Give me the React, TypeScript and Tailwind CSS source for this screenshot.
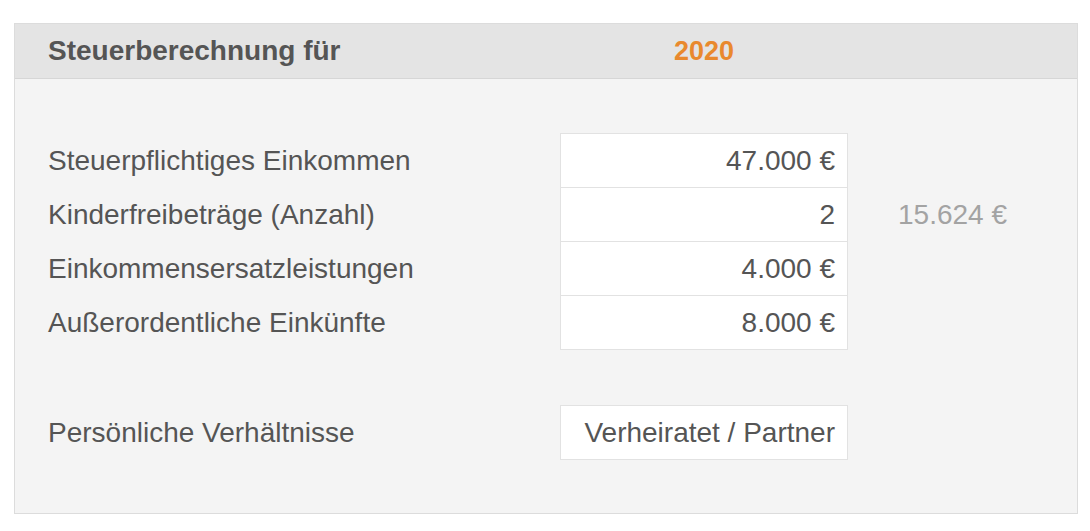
import React from 'react';

const rows = [
  { label: 'Steuerpflichtiges Einkommen', value: '47.000 €' },
  { label: 'Kinderfreibeträge (Anzahl)', value: '2', extra: '15.624 €' },
  { label: 'Einkommensersatzleistungen', value: '4.000 €' },
  { label: 'Außerordentliche Einkünfte', value: '8.000 €' },
];

export default function App() {
  return (
    <div className="min-h-[531px] bg-white pl-[14px] pt-[23px] font-['Liberation_Sans',Arial,sans-serif] text-[28px] text-[#555]">
      <div className="w-[1064px] border border-[#dcdcdc] bg-[#f4f4f4]">
        {/* Header */}
        <div className="grid h-[55px] grid-cols-[512px_288px_1fr] items-center border-b border-[#d6d6d6] bg-[#e4e4e4] pl-[33px] font-bold">
          <div className="text-[#555]">Steuerberechnung für</div>
          <div className="text-center text-[27px] text-[#e9892e]">2020</div>
          <div />
        </div>

        {/* Eingaben */}
        <div className="pl-[33px] pt-[54px]">
          {rows.map((row, i) => (
            <div key={row.label} className={`grid grid-cols-[512px_288px_1fr] items-center ${i > 0 ? '-mt-px' : ''}`}>
              <div>{row.label}</div>
              <div className="flex h-[55px] items-center justify-end border border-[#e2e2e2] bg-white pr-[12px]">
                {row.value}
              </div>
              <div className="pl-[50px] text-[#a3a3a3]">{row.extra}</div>
            </div>
          ))}

          <div className="mt-[55px] grid grid-cols-[512px_288px_1fr] items-center pb-[53px]">
            <div>Persönliche Verhältnisse</div>
            <div className="flex h-[55px] items-center justify-end border border-[#e2e2e2] bg-white pr-[12px]">
              Verheiratet / Partner
            </div>
            <div />
          </div>
        </div>
      </div>
    </div>
  );
}
